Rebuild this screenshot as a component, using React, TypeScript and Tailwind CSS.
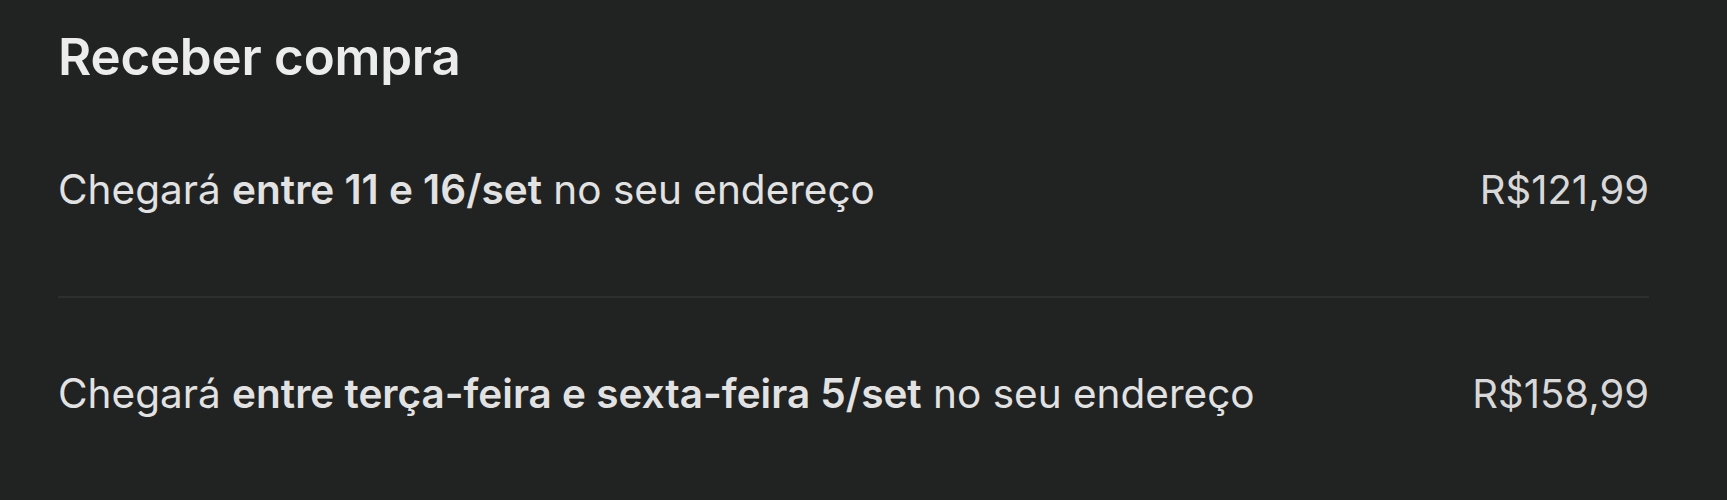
import React from 'react';

interface ShippingOption {
  id: string;
  parts: { text: string; bold?: boolean }[];
  price: string;
}

const options: ShippingOption[] = [
  {
    id: 'opt-1',
    parts: [
      { text: 'Chegará ' },
      { text: 'entre 11 e 16', bold: true },
      { text: '/set', bold: true },
      { text: ' no seu endereço' },
    ],
    price: 'R$121,99',
  },
  {
    id: 'opt-2',
    parts: [
      { text: 'Chegará ' },
      { text: 'entre terça-feira e sexta-feira 5', bold: true },
      { text: '/set', bold: true },
      { text: ' no seu endereço' },
    ],
    price: 'R$158,99',
  },
];

const App: React.FC = () => {
  return (
    <div className="min-h-[500px] bg-[#212222] pl-[58px] pr-[78px] pt-[30px] font-['Inter','Noto_Sans',sans-serif] text-[#e6e6e6]">
      <h2 className="text-[51px] font-semibold leading-[54px] tracking-[-0.2px] text-[#ececec]">Receber compra</h2>

      <div className="mt-[10px]">
        {options.map((opt, idx) => (
          <div
            key={opt.id}
            className={`flex items-center justify-between pt-[76px] pb-[86px] ${
              idx < options.length - 1 ? 'border-b-2 border-[#2d2e2e]' : ''
            }`}
          >
            <p className="text-[40.5px] leading-[40px] text-[#e2e2e2]">
              {opt.parts.map((p, i) => (
                <span key={i} className={p.bold ? 'font-semibold' : ''}>
                  {p.text}
                </span>
              ))}
            </p>
            <span className="text-[40px] leading-[40px] text-[#d8d8d8]">{opt.price}</span>
          </div>
        ))}
      </div>
    </div>
  );
};

export default App;
